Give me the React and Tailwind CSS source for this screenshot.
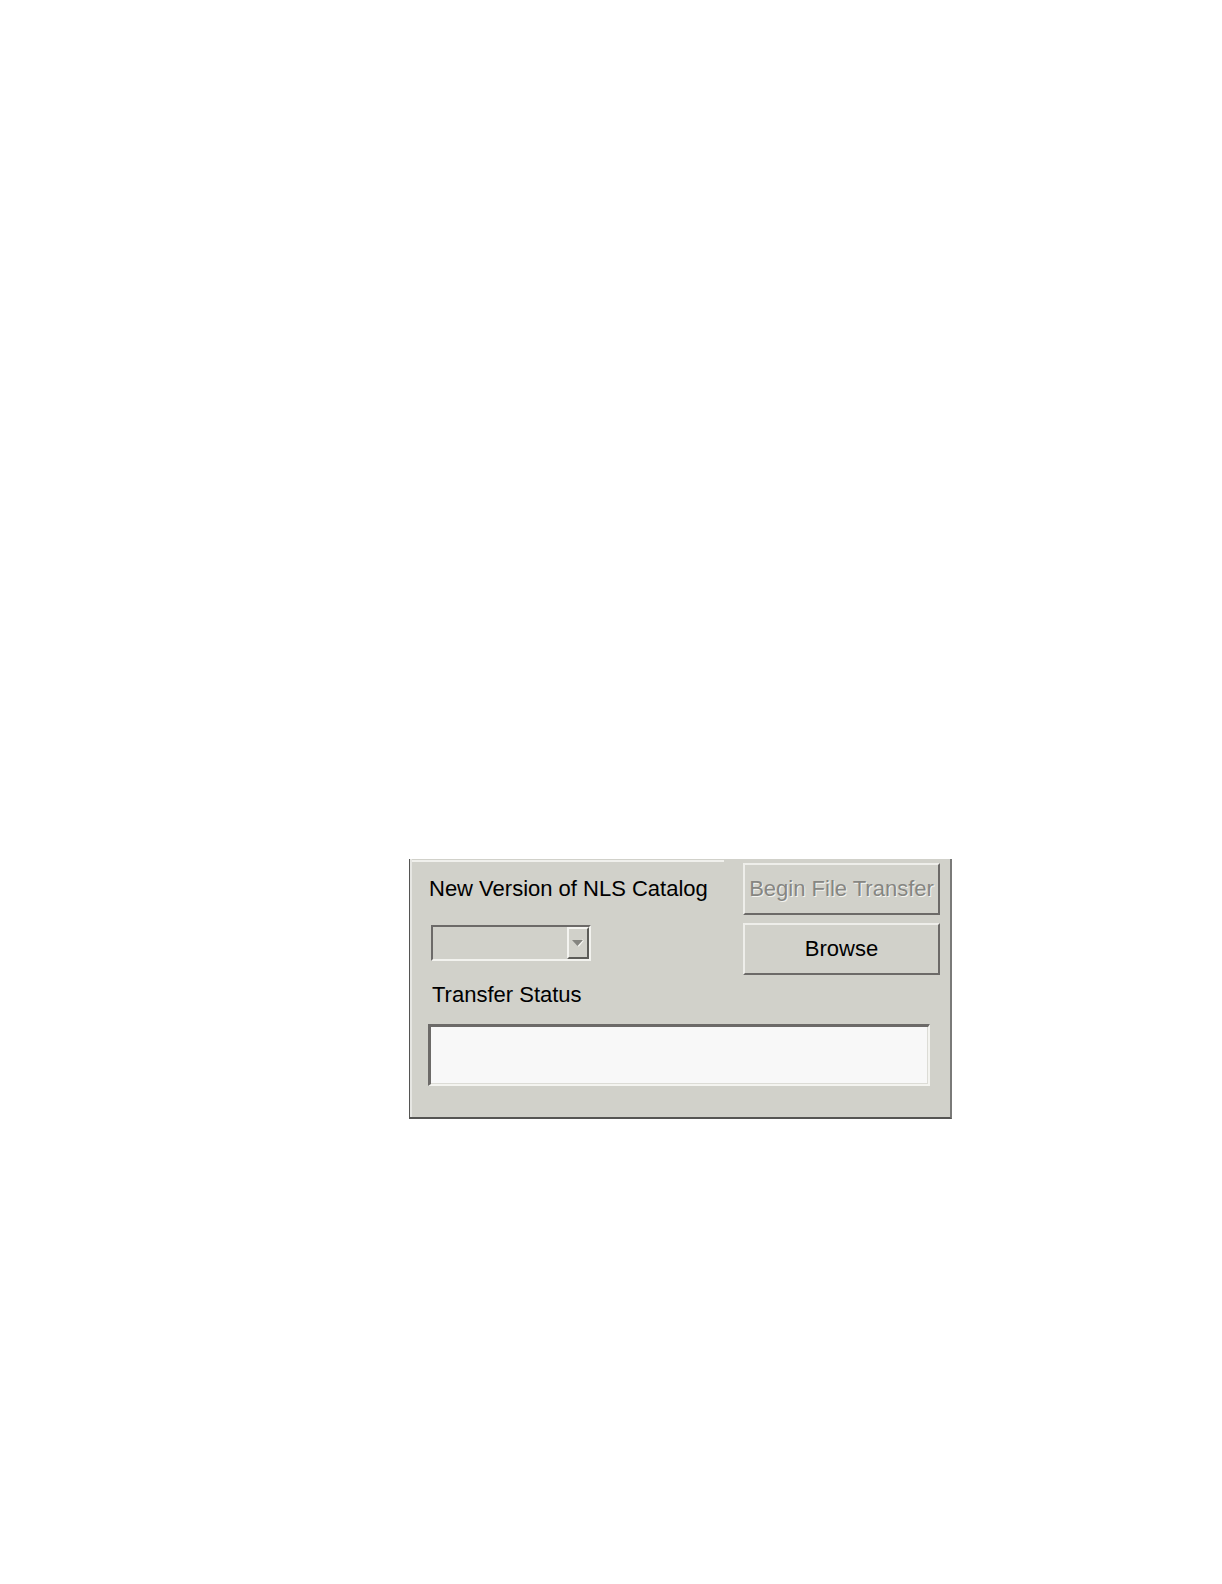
const buttonBase =
  "h-[52px] w-full whitespace-nowrap border-2 border-t-[#eeeeea] border-l-[#eeeeea] border-r-[#6c6a68] border-b-[#6c6a68] bg-[#d1d1ca] text-center";

function CatalogSelect() {
  return (
    <div className="relative mt-[23px] ml-[2px] h-[36px] w-[160px]">
      <select
        id="catalog"
        disabled
        className="h-full w-full appearance-none border-2 border-t-[#6c6a68] border-l-[#6c6a68] border-r-[#f2f2ee] border-b-[#f2f2ee] bg-[#d1d1ca] opacity-100"
      />
      <span className="pointer-events-none absolute top-[2px] right-[2px] flex h-[32px] w-[22px] items-center justify-center border-2 border-t-[#f4f4f0] border-l-[#f4f4f0] border-r-[#5c5c58] border-b-[#5c5c58] bg-[#d1d1ca]">
        <svg width="12" height="8" viewBox="0 0 12 8" aria-hidden="true">
          <path d="M11 1L6 7" stroke="#f6f6f2" strokeWidth="2" />
          <path d="M0 1H11L5.5 7Z" fill="#858580" />
        </svg>
      </span>
    </div>
  );
}

export default function App() {
  return (
    <main className="min-h-screen bg-white pt-[859px] pr-[270px] pl-[409px] font-['Liberation_Sans',Arial,sans-serif] text-[22px] leading-[26px] text-black">
      <form
        onSubmit={(e) => e.preventDefault()}
        className="border-r-2 border-b-2 border-l border-r-[#7a7a78] border-b-[#555553] border-l-[#555553] bg-[#d1d1ca]"
      >
        <div className="border-l-2 border-l-[#e6e6e2] pt-px pb-[31px]">
          <div className="flex gap-[19px] pr-[10px]">
            <div className="min-w-0 flex-1 border-t-2 border-t-[#f0f0ec] pt-[14px] pl-[17px]">
              <label htmlFor="catalog" className="block whitespace-nowrap">
                New Version of NLS Catalog
              </label>
              <CatalogSelect />
            </div>
            <div className="flex w-[197px] flex-col gap-[8px] pt-[3px]">
              <button
                type="button"
                disabled
                className={`${buttonBase} text-[#868682] [text-shadow:1px_1px_0_#f4f4f0]`}
              >
                Begin File Transfer
              </button>
              <button type="button" className={buttonBase}>
                Browse
              </button>
            </div>
          </div>
          <label htmlFor="status" className="mt-[7px] ml-[20px] block">
            Transfer Status
          </label>
          <div className="mt-[16px] mr-[20px] ml-[16px]">
            <input
              id="status"
              type="text"
              readOnly
              className="block h-[62px] w-full border-t-[3px] border-r-2 border-b-2 border-l-[3px] border-t-[#6c6a68] border-l-[#6c6a68] border-r-[#f4f4f0] border-b-[#f4f4f0] bg-[#f8f8f8] px-2 shadow-[inset_-1px_-1px_0_#dcdcd6] outline-none"
            />
          </div>
        </div>
      </form>
    </main>
  );
}
